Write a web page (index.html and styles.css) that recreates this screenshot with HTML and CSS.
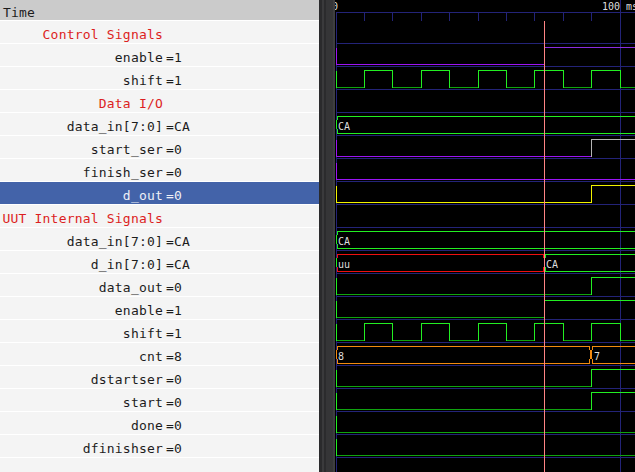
FILE: index.html
```html
<!DOCTYPE html>
<html>
<head>
<meta charset="utf-8">
<link rel="stylesheet" href="styles.css">
</head>
<body>
<div class="app">
  <div class="names">
    <div class="hdr">Time</div>
    <div class="row group"><span class="n">Control Signals</span></div>
    <div class="row"><span class="n">enable</span><span class="v">=1</span></div>
    <div class="row"><span class="n">shift</span><span class="v">=1</span></div>
    <div class="row group"><span class="n">Data I/O</span></div>
    <div class="row"><span class="n">data_in[7:0]</span><span class="v">=CA</span></div>
    <div class="row"><span class="n">start_ser</span><span class="v">=0</span></div>
    <div class="row"><span class="n">finish_ser</span><span class="v">=0</span></div>
    <div class="row sel"><span class="n">d_out</span><span class="v">=0</span></div>
    <div class="row group"><span class="n">UUT Internal Signals</span></div>
    <div class="row"><span class="n">data_in[7:0]</span><span class="v">=CA</span></div>
    <div class="row"><span class="n">d_in[7:0]</span><span class="v">=CA</span></div>
    <div class="row"><span class="n">data_out</span><span class="v">=0</span></div>
    <div class="row"><span class="n">enable</span><span class="v">=1</span></div>
    <div class="row"><span class="n">shift</span><span class="v">=1</span></div>
    <div class="row"><span class="n">cnt</span><span class="v">=8</span></div>
    <div class="row"><span class="n">dstartser</span><span class="v">=0</span></div>
    <div class="row"><span class="n">start</span><span class="v">=0</span></div>
    <div class="row"><span class="n">done</span><span class="v">=0</span></div>
    <div class="row"><span class="n">dfinishser</span><span class="v">=0</span></div>
  </div>
  <div class="splitter"></div>
  <svg class="wave" width="300" height="472" viewBox="335 0 300 472" shape-rendering="crispEdges">
    <!-- grid -->
    <g class="grid">
      <path d="M336 12.5 H635"/>
      <path d="M336.5 12 V472 M620.5 0 V472"/>
      <path d="M364.5 12 V21 M392.5 12 V21 M421.5 12 V21 M449.5 12 V21 M478.5 12 V21 M506.5 12 V21 M534.5 12 V21 M563.5 12 V21 M591.5 12 V21"/>
      <path d="M336 43.5 H635 M336 66.5 H635 M336 89.5 H635 M336 112.5 H635 M336 135.5 H635 M336 158.5 H635 M336 181.5 H635 M336 204.5 H635 M336 227.5 H635 M336 250.5 H635 M336 273.5 H635 M336 296.5 H635 M336 319.5 H635 M336 342.5 H635 M336 365.5 H635 M336 388.5 H635 M336 411.5 H635 M336 434.5 H635 M336 457.5 H635"/>
    </g>
    <g class="ruler">
      <text x="332" y="10">0</text>
      <text x="602" y="10">100 ms</text>
    </g>

    <!-- enable (purple) -->
    <path class="pu-lo" d="M336.5 47.5 V64.5 M336 64.5 H544"/>
    <path class="pu-hi" d="M545 47.5 H635"/>

    <!-- shift clock -->
    <path class="g-hi" d="M336.5 70.5 V87.5 M364.5 87.5 V70.5 H392.5 V87.5 M421.5 87.5 V70.5 H449.5 V87.5 M478.5 87.5 V70.5 H506.5 V87.5 M534.5 87.5 V70.5 H563.5 V87.5 M591.5 87.5 V70.5 H620.5 V87.5"/>
    <path class="g-lo" d="M337 87.5 H364 M393 87.5 H421 M450 87.5 H478 M507 87.5 H534 M564 87.5 H591 M621 87.5 H635"/>

    <!-- data_in bus -->
    <path class="g-hi" d="M635 116.5 H337.5 V120 M336.5 120 V129 M337.5 129 V133.5 H635"/>
    <text class="bus" x="338" y="130">CA</text>

    <!-- start_ser -->
    <path class="pu-lo" d="M336.5 139.5 V156.5 M336 156.5 H591"/>
    <path class="gray" d="M591.5 156.5 V139.5 H635"/>

    <!-- finish_ser -->
    <path class="pu-lo" d="M336.5 162.5 V179.5 M336 179.5 H635"/>

    <!-- d_out -->
    <path class="yel" d="M336.5 185.5 V202.5 M336 202.5 H591.5 V185.5 H635"/>

    <!-- data_in bus (UUT) -->
    <path class="g-hi" d="M635 231.5 H337.5 V235 M336.5 235 V244 M337.5 244 V248.5 H635"/>
    <text class="bus" x="338" y="245">CA</text>

    <!-- d_in -->
    <path class="g-hi" d="M336.5 258 V267"/>
    <path class="red" d="M337.5 258 V254.5 H543.5 V258 M543.5 267 V271.5 H337.5 V267"/>
    <path class="g-hi" d="M635 254.5 H545.5 V258 M545.5 267 V271.5 H635"/>
    <text class="bus" x="338" y="268">uu</text>
    <text class="bus" x="546" y="268">CA</text>

    <!-- data_out -->
    <path class="g-hi" d="M336.5 277.5 V294.5 M591.5 294.5 V277.5 H635"/>
    <path class="g-lo" d="M337 294.5 H591"/>

    <!-- enable -->
    <path class="g-hi" d="M336.5 300.5 V317.5 M545 300.5 H635"/>
    <path class="g-lo" d="M337 317.5 H544"/>

    <!-- shift clock -->
    <path class="g-hi" d="M336.5 323.5 V340.5 M364.5 340.5 V323.5 H392.5 V340.5 M421.5 340.5 V323.5 H449.5 V340.5 M478.5 340.5 V323.5 H506.5 V340.5 M534.5 340.5 V323.5 H563.5 V340.5 M591.5 340.5 V323.5 H620.5 V340.5"/>
    <path class="g-lo" d="M337 340.5 H364 M393 340.5 H421 M450 340.5 H478 M507 340.5 H534 M564 340.5 H591 M621 340.5 H635"/>

    <!-- cnt -->
    <path class="org" d="M336.5 350 V359 M337.5 350 V346.5 H589.5 V350 M590.5 350 V359 M589.5 359 V363.5 H337.5 V359 M591.5 350 V359 M592.5 350 V346.5 H635 M592.5 359 V363.5 H635"/>
    <text class="bus" x="338" y="360">8</text>
    <text class="bus" x="594" y="360">7</text>

    <!-- dstartser -->
    <path class="g-hi" d="M336.5 369.5 V386.5 M591.5 386.5 V369.5 H635"/>
    <path class="g-lo" d="M337 386.5 H591"/>

    <!-- start -->
    <path class="g-hi" d="M336.5 392.5 V409.5 M591.5 409.5 V392.5 H635"/>
    <path class="g-lo" d="M337 409.5 H591"/>

    <!-- done -->
    <path class="g-hi" d="M336.5 415.5 V432.5"/>
    <path class="g-lo" d="M337 432.5 H635"/>

    <!-- dfinishser -->
    <path class="g-hi" d="M336.5 438.5 V455.5"/>
    <path class="g-lo" d="M337 455.5 H635"/>

    <!-- cursor -->
    <path class="cursor" d="M544.5 21 V472"/>
  </svg>
</div>
</body>
</html>
```

FILE: styles.css
```css
html, body {
  margin: 0;
  padding: 0;
  background: #000;
}

.app {
  display: flex;
  width: 635px;
  height: 472px;
  overflow: hidden;
}

.names {
  width: 319px;
  flex: none;
  background: #f4f4f4;
  font-family: "DejaVu Sans Mono", monospace;
  font-size: 13px;
  letter-spacing: 0.2px;
  color: #1c1c1c;
}

.hdr {
  height: 21px;
  box-sizing: border-box;
  border-bottom: 1px solid #ffffff;
  background: #cbcbcb;
  padding: 5px 0 0 3px;
  line-height: 16px;
}

.row {
  height: 23px;
  box-sizing: border-box;
  border-bottom: 1px solid #ffffff;
  display: grid;
  grid-template-columns: 163px auto;
  column-gap: 3px;
  padding-top: 6px;
  line-height: 16px;
  white-space: nowrap;
}

.n {
  text-align: right;
}

.group .n {
  color: #dc1e22;
}

.sel {
  background: #4363a9;
  color: #eef0f6;
}

.splitter {
  width: 16px;
  flex: none;
  background: linear-gradient(to right,
    #2a2a2c 0, #2a2a2c 3px,
    #3a3a3c 3px, #3a3a3c 5px,
    #2b2b2d 5px, #2b2b2d 7px,
    #353537 7px, #353537 14px,
    #3e3e40 14px, #3e3e40 16px);
}

.wave {
  display: block;
  flex: none;
  background: #000;
}

.grid path {
  fill: none;
  stroke: #232378;
  stroke-width: 1;
}

.ruler text, .bus {
  font-family: "DejaVu Sans Mono", monospace;
  font-size: 10px;
  fill: #dedede;
}

.wave path {
  fill: none;
  stroke-width: 1;
}

.pu-lo { stroke: #9a14f4; }
.pu-hi { stroke: #8c2ee0; }
.g-hi { stroke: #22ee22; }
.g-lo { stroke: #0fa40f; }
.yel { stroke: #f2f200; }
.red { stroke: #ee1010; }
.org { stroke: #f28a10; }
.gray { stroke: #b4b4b4; }
.wave .cursor { stroke: #ff8484; }
```
